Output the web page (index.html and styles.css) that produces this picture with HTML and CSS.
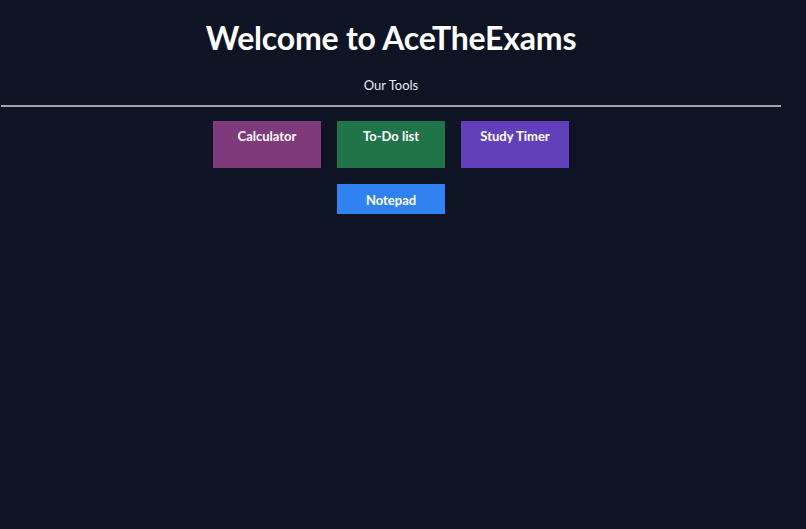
FILE: index.html
```html
<!DOCTYPE html>
<html>
<head>
<meta charset="utf-8">
<link rel="stylesheet" href="styles.css">
</head>
<body>
<div class="page">
  <h1 class="title">Welcome to AceTheExams</h1>
  <p class="subtitle">Our Tools</p>
  <hr class="rule">
  <div class="tools">
    <button class="tool calc">Calculator</button>
    <button class="tool todo">To-Do list</button>
    <button class="tool timer">Study Timer</button>
  </div>
  <div class="tools">
    <button class="tool note">Notepad</button>
  </div>
</div>
</body>
</html>
```
FILE: styles.css
```css
html, body {
  margin: 0;
  padding: 0;
  background: #0e1424;
  height: 100%;
}
.page {
  width: 782px;
  font-family: Lato, "Open Sans", sans-serif;
  color: #ffffff;
  text-align: center;
  padding-top: 18px;
}
.title {
  margin: 0;
  font-size: 32px;
  font-weight: 700;
  line-height: 40px;
  letter-spacing: -0.2px;
}
.subtitle {
  margin: 19px 0 0;
  font-size: 13px;
  line-height: 16px;
  color: #e8e9ee;
}
.rule {
  margin: 12px 1px 14px;
  border: none;
  height: 2px;
  background: #a0a4ad;
}
.tools {
  display: flex;
  justify-content: center;
  gap: 16px;
  margin-bottom: 16px;
}
.tool {
  width: 108px;
  height: 47px;
  border: none;
  padding: 7px 0 0;
  font-family: Lato, "Open Sans", sans-serif;
  font-weight: 700;
  font-size: 13px;
  line-height: 16px;
  color: #ffffff;
  display: flex;
  justify-content: center;
  align-items: flex-start;
}
.calc { background: #7e3a7a; }
.todo { background: #1f7448; }
.timer { background: #623fbb; }
.note {
  background: #2f82ef;
  height: 30px;
  padding-top: 8px;
}
```
